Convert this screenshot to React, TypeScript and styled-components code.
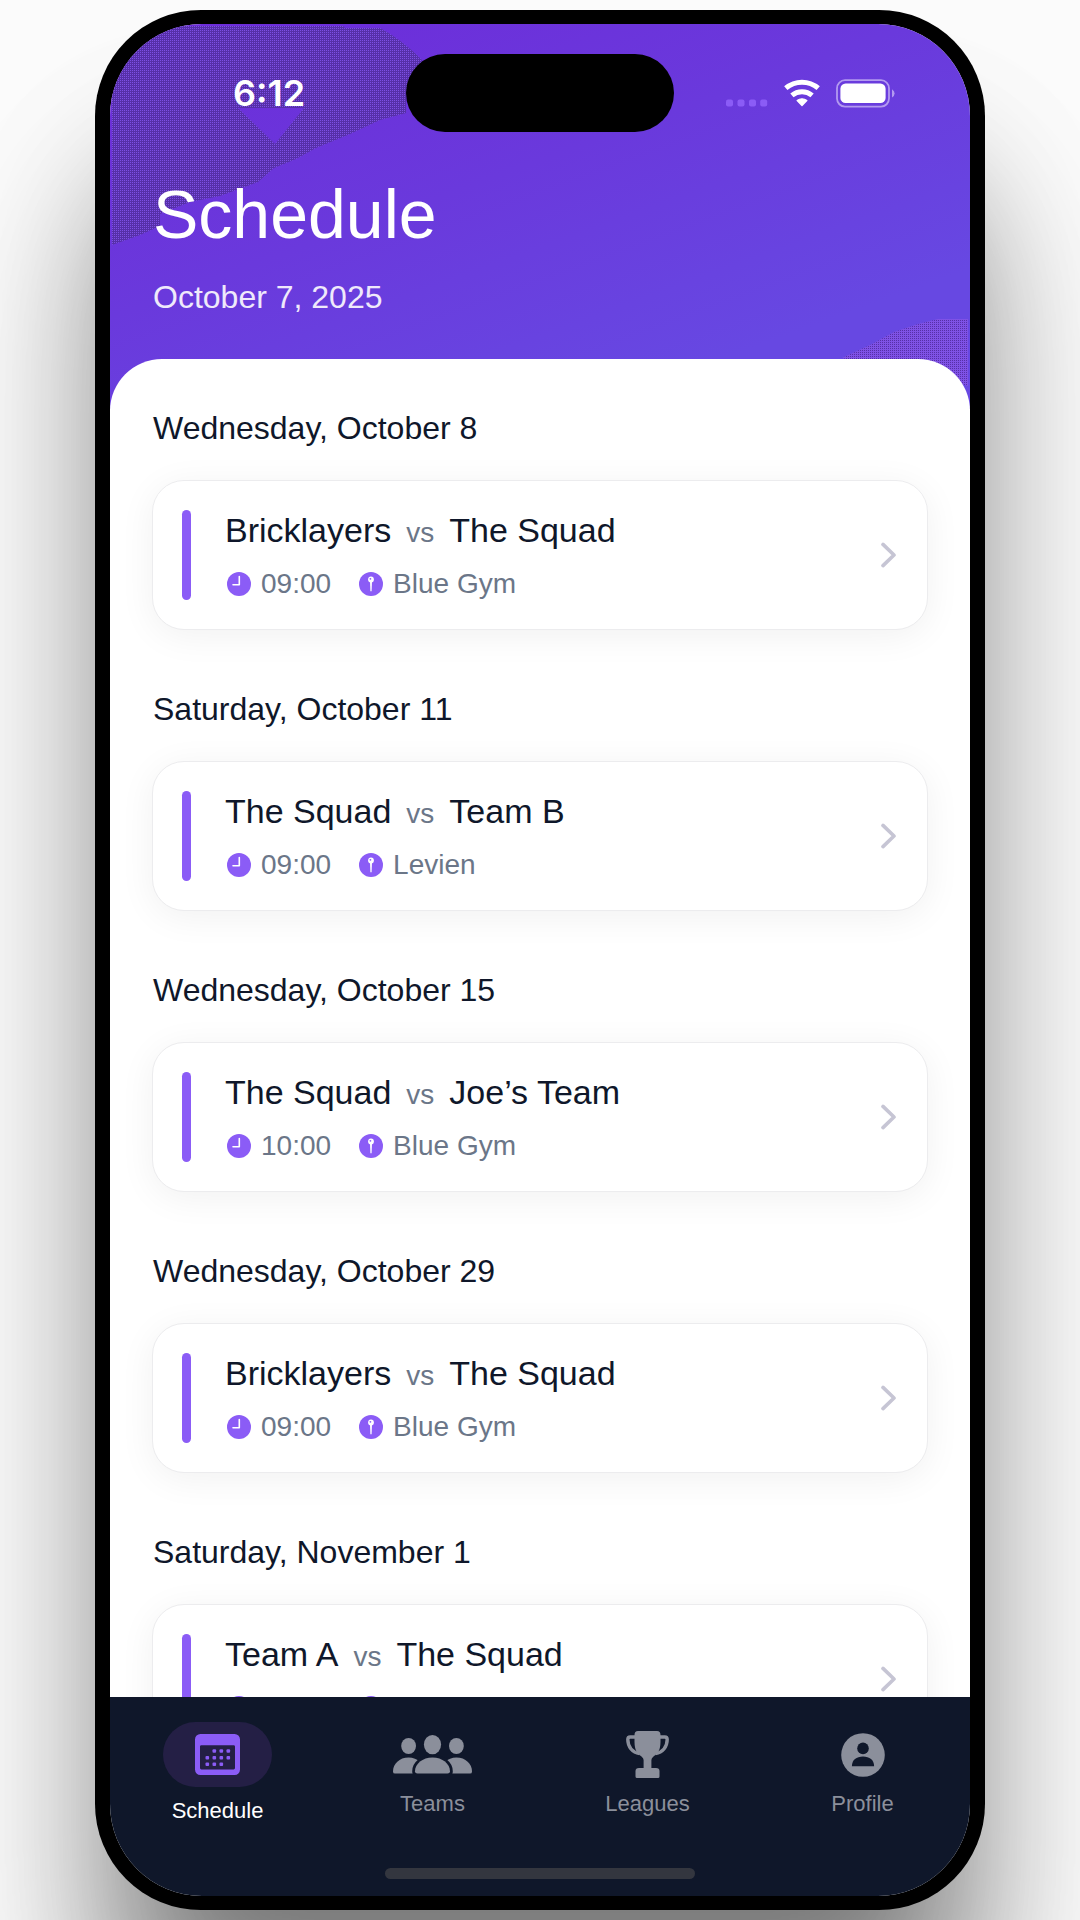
import React from "react";
import styled, { createGlobalStyle } from "styled-components";

const color = {
  ink: "#0f172a",
  muted: "#6b7688",
  violet: "#8b5cf6",
  navy: "#0f172a",
  pill: "#241f45",
  idle: "#8b8f9b",
};

const GlobalStyle = createGlobalStyle`
  *, *::before, *::after { box-sizing: border-box; }
  body {
    margin: 0;
    background: #fbfbfb;
    font-family: "Liberation Sans", Arial, sans-serif;
    color: ${color.ink};
  }
  h1, h2, p, ul { margin: 0; padding: 0; font-weight: 400; }
  ul { list-style: none; }
  a { color: inherit; text-decoration: none; }
  svg { display: block; flex: none; }
`;

const Page = styled.div`
  display: flex;
  justify-content: center;
  height: 100vh;
  padding: 10px 95px;
  overflow: hidden;
`;

const Phone = styled.div`
  display: flex;
  width: 100%;
  max-width: 890px;
  padding: 14px 15px;
  background: #000;
  border-radius: 106px;
  box-shadow: 0 170px 170px 0 rgba(0, 0, 0, 0.2), 0 140px 150px -30px rgba(0, 0, 0, 0.4);
`;

const Screen = styled.div`
  display: flex;
  flex-direction: column;
  flex: 1;
  min-width: 0;
  overflow: hidden;
  background: #fff;
  border-radius: 92px;
`;

const Header = styled.header`
  position: relative;
  flex: none;
  padding: 30px 0 92px;
  color: #fff;
  background: linear-gradient(160deg, #6d2bd9 0%, #6a39dc 42%, #6748e2 80%, #6748e2 100%);
`;

const TextureLeft = styled.svg`
  position: absolute;
  top: 0;
  left: 0;
`;

const TextureRight = styled.svg`
  position: absolute;
  right: 0;
  bottom: 0;
`;

const StatusBar = styled.div`
  position: relative;
  display: grid;
  grid-template-columns: 1fr 268px 1fr;
  align-items: center;
`;

const Time = styled.time`
  padding-left: 22px;
  text-align: center;
  font: 600 36px/40px Inter, "Liberation Sans", sans-serif;
`;

const Island = styled.div`
  height: 78px;
  border-radius: 39px;
  background: #000;
`;

const StatusIcons = styled.div`
  display: flex;
  justify-content: center;
  align-items: center;
  gap: 16px;
  padding-right: 22px;
`;

const Heading = styled.div`
  position: relative;
  display: flex;
  flex-direction: column;
  gap: 25px;
  padding: 44px 43px 0;
`;

const Title = styled.h1`
  font-size: 68px;
  line-height: 76px;
`;

const Today = styled.p`
  font-size: 32px;
  line-height: 40px;
  color: #efe9fb;
`;

const Panel = styled.main`
  position: relative;
  display: flex;
  flex-direction: column;
  gap: 59px;
  flex: 1;
  min-height: 0;
  margin-top: -50px;
  padding: 49px 42px 0;
  overflow: hidden;
  background: #fff;
  border-radius: 52px 52px 0 0;
`;

const Day = styled.section`
  display: flex;
  flex-direction: column;
  flex: none;
  gap: 32px;
`;

const DayTitle = styled.h2`
  padding-left: 1px;
  font-size: 32px;
  line-height: 40px;
`;

const Card = styled.a`
  display: flex;
  align-items: center;
  padding: 29px;
  background: #fff;
  border: 1px solid #ececee;
  border-radius: 32px;
  box-shadow: 0 6px 36px rgba(0, 0, 0, 0.06);
`;

const Accent = styled.span`
  align-self: stretch;
  width: 9px;
  border-radius: 5px;
  background: ${color.violet};
`;

const Details = styled.div`
  flex: 1;
  display: flex;
  flex-direction: column;
  gap: 18px;
  padding-left: 34px;
`;

const Teams = styled.div`
  display: flex;
  align-items: baseline;
  gap: 15px;
  font-size: 34px;
  line-height: 40px;
`;

const Versus = styled.span`
  font-size: 28px;
  line-height: 32px;
  color: ${color.muted};
`;

const Meta = styled.div`
  display: flex;
  gap: 28px;
  padding-left: 2px;
`;

const MetaItem = styled.span`
  display: flex;
  align-items: center;
  gap: 10px;
  font-size: 28px;
  line-height: 32px;
  color: ${color.muted};
`;

const NavBar = styled.footer`
  flex: none;
  display: flex;
  flex-direction: column;
  align-items: center;
  gap: 43px;
  padding: 25px 0 17px;
  background: ${color.navy};
`;

const Tabs = styled.nav`
  align-self: stretch;
  display: grid;
  grid-template-columns: repeat(4, 1fr);
  align-items: center;
`;

const Tab = styled.a<{ $active?: boolean }>`
  display: flex;
  flex-direction: column;
  align-items: center;
  gap: 10px;
  font-size: 22px;
  line-height: 28px;
  color: ${(p) => (p.$active ? "#fff" : color.idle)};
`;

const TabIcon = styled.span<{ $active?: boolean }>`
  display: flex;
  align-items: center;
  justify-content: center;
  width: 109px;
  height: ${(p) => (p.$active ? 65 : 51)}px;
  border-radius: 33px;
  background: ${(p) => (p.$active ? color.pill : "transparent")};
`;

const HomeIndicator = styled.div`
  width: 36%;
  height: 11px;
  border-radius: 6px;
  background: #33363f;
`;

const Grain = ({ id, base, speck }: { id: string; base: string; speck: string }) => (
  <pattern id={id} width="2" height="2" patternUnits="userSpaceOnUse">
    <rect width="2" height="2" fill={base} />
    <rect width="1" height="1" fill={speck} />
  </pattern>
);

const HeaderTexture = () => (
  <>
    <TextureLeft width="320" height="225" viewBox="0 0 320 225" aria-hidden="true">
      <defs><Grain id="grain-left" base="#562fa8" speck="#7d50e4" /></defs>
      <path
        fill="url(#grain-left)"
        fillRule="evenodd"
        d="M2 2H233L235 4H270C288 14 300 24 312 36L296 70V89L270 96L240 110L206 124L186 135L164 144L148 158L110 172L80 178L50 190V202L30 211L2 221ZM128 84L165 120L194 84Z"
      />
    </TextureLeft>
    <TextureRight width="130" height="91" viewBox="0 0 130 91" aria-hidden="true">
      <defs><Grain id="grain-right" base="#7f52e6" speck="#562fa8" /></defs>
      <path fill="url(#grain-right)" d="M2 40L32 26L54 14L78 6L98 1H128V68L100 60Z" />
    </TextureRight>
  </>
);

const SignalIcon = () => (
  <svg width="42" height="28" viewBox="0 0 42 28" fill={color.violet} aria-hidden="true">
    {[0, 11.5, 23, 34.2].map((x) => (
      <rect key={x} x={x} y="20.5" width="7" height="7" rx="2" />
    ))}
  </svg>
);

const WifiIcon = () => (
  <svg width="36" height="28" viewBox="0 0 36 28" aria-hidden="true">
    <g fill="none" stroke="#fff">
      <path strokeWidth="5" d="M1.8 9.2A24.7 24.7 0 0 1 34.2 9.2" />
      <path strokeWidth="5" d="M7.9 16.4A15.5 15.5 0 0 1 28.1 16.4" />
    </g>
    <path
      d="M18 26.4L13.2 21.6A7.5 7.5 0 0 1 22.8 21.6Z"
      fill="#fff" stroke="#fff" strokeWidth="1.4" strokeLinejoin="round"
    />
  </svg>
);

const BatteryIcon = () => (
  <svg width="60" height="29" viewBox="0 0 60 29" aria-hidden="true">
    <rect x="1" y="1.2" width="52" height="26.4" rx="8" fill="none" stroke="#b39af0" strokeWidth="1.8" />
    <rect x="4.4" y="4.5" width="45.2" height="19.6" rx="5.2" fill="#fff" />
    <path d="M56 10.3Q58.6 12 58.6 14.4T56 18.5Z" fill="#b39af0" />
  </svg>
);

const ClockIcon = () => (
  <svg width="24" height="24" viewBox="0 0 24 24" aria-hidden="true">
    <circle cx="12" cy="12" r="12" fill={color.violet} />
    <path d="M12.3 4.5V12.7H6" fill="none" stroke="#fff" strokeWidth="1.6" strokeLinecap="round" strokeLinejoin="round" />
  </svg>
);

const PinIcon = () => (
  <svg width="24" height="24" viewBox="0 0 24 24" aria-hidden="true">
    <circle cx="12" cy="12" r="12" fill={color.violet} />
    <path d="M11 9.5H13L12.6 19.2H11.4Z" fill="#fff" />
    <circle cx="12" cy="7.4" r="2.9" fill="#fff" />
    <circle cx="11.4" cy="6.8" r="0.9" fill={color.violet} />
  </svg>
);

const ChevronIcon = () => (
  <svg width="17" height="26" viewBox="0 0 17 26" aria-hidden="true">
    <path d="M2 2.4L13 13L2 23.6" fill="none" stroke="#c6c5d4" strokeWidth="3.6" strokeLinecap="round" strokeLinejoin="round" />
  </svg>
);

const CalendarIcon = () => (
  <svg width="45" height="41" viewBox="0 0 45 41" fill={color.violet} aria-hidden="true">
    <path
      fillRule="evenodd"
      d="M5.4 0H39.6A5.4 5.4 0 0 1 45 5.4V35.6A5.4 5.4 0 0 1 39.6 41H5.4A5.4 5.4 0 0 1 0 35.6V5.4A5.4 5.4 0 0 1 5.4 0ZM6.4 11.2A1.4 1.4 0 0 0 5 12.6V34A1.4 1.4 0 0 0 6.4 35.4H38.6A1.4 1.4 0 0 0 40 34V12.6A1.4 1.4 0 0 0 38.6 11.2Z"
    />
    {[[19.3, 17], [26.3, 17], [33.3, 17], [12.3, 23.7], [19.3, 23.7], [26.3, 23.7], [33.3, 23.7], [12.3, 30.2], [19.3, 30.2], [26.3, 30.2]].map(([x, y]) => (
      <rect key={`${x}-${y}`} x={x - 1.8} y={y - 1.8} width="3.6" height="3.6" rx="1" />
    ))}
  </svg>
);

const TeamsIcon = () => (
  <svg width="79" height="39" viewBox="0 0 79 39" fill={color.idle} aria-hidden="true">
    <ellipse cx="15.6" cy="11" rx="7.4" ry="8" />
    <ellipse cx="63.4" cy="11" rx="7.4" ry="8" />
    <path d="M0 36.4C0 29 6.4 22.6 15.6 22.6S31 29 31 38.6H2Q0 38.6 0 36.4Z" />
    <path d="M79 36.4C79 29 72.6 22.6 63.4 22.6S48 29 48 38.6H77Q79 38.6 79 36.4Z" />
    <path
      d="M22 36.3C22 29 29.5 22.6 39.5 22.6S57 29 57 36.3Q57 38.6 54.6 38.6H24.4Q22 38.6 22 36.3Z"
      stroke={color.navy} strokeWidth="5.6"
    />
    <path d="M22 36.3C22 29 29.5 22.6 39.5 22.6S57 29 57 36.3Q57 38.6 54.6 38.6H24.4Q22 38.6 22 36.3Z" />
    <ellipse cx="39.5" cy="9.6" rx="8.6" ry="9.6" />
  </svg>
);

const TrophyIcon = () => (
  <svg width="43" height="47" viewBox="0 0 43 47" fill={color.idle} aria-hidden="true">
    <path d="M12 0H31Q34.5 0 34.5 4V11C34.5 20 31 23 27.5 25.5Q25.4 27.2 25.4 29V37H30Q33.5 37 33.5 40V45.5Q33.5 47 32 47H11Q9.5 47 9.5 45.5V40Q9.5 37 13 37H17.6V29Q17.6 27.2 15.5 25.5C12 23 8.5 20 8.5 11V4Q8.5 0 12 0Z" />
    <path
      d="M9.5 6H4.2Q1.8 6 1.8 8.6C1.8 16 6.5 21.6 13.5 22.6M33.5 6H38.8Q41.2 6 41.2 8.6C41.2 16 36.5 21.6 29.5 22.6"
      fill="none" stroke={color.idle} strokeWidth="3.4"
    />
  </svg>
);

const ProfileIcon = () => (
  <svg width="44" height="44" viewBox="0 0 44 44" aria-hidden="true">
    <circle cx="22" cy="22" r="21.8" fill={color.idle} />
    <circle cx="22" cy="15.4" r="5.8" fill={color.navy} />
    <path d="M10.9 33.2C10.9 27 15.5 23.6 22 23.6S33.1 27 33.1 33.2Z" fill={color.navy} />
  </svg>
);

const games = [
  { day: "Wednesday, October 8", home: "Bricklayers", away: "The Squad", time: "09:00", place: "Blue Gym" },
  { day: "Saturday, October 11", home: "The Squad", away: "Team B", time: "09:00", place: "Levien" },
  { day: "Wednesday, October 15", home: "The Squad", away: "Joe’s Team", time: "10:00", place: "Blue Gym" },
  { day: "Wednesday, October 29", home: "Bricklayers", away: "The Squad", time: "09:00", place: "Blue Gym" },
  { day: "Saturday, November 1", home: "Team A", away: "The Squad", time: "09:00", place: "Blue Gym" },
];

const tabs = [
  { label: "Schedule", Icon: CalendarIcon, active: true },
  { label: "Teams", Icon: TeamsIcon, active: false },
  { label: "Leagues", Icon: TrophyIcon, active: false },
  { label: "Profile", Icon: ProfileIcon, active: false },
];

export default function App() {
  return (
    <Page>
      <GlobalStyle />
      <Phone>
        <Screen>
          <Header>
            <HeaderTexture />
            <StatusBar>
              <Time>6:12</Time>
              <Island />
              <StatusIcons>
                <SignalIcon />
                <WifiIcon />
                <BatteryIcon />
              </StatusIcons>
            </StatusBar>
            <Heading>
              <Title>Schedule</Title>
              <Today>October 7, 2025</Today>
            </Heading>
          </Header>
          <Panel>
            {games.map((game) => (
              <Day key={game.day}>
                <DayTitle>{game.day}</DayTitle>
                <Card href="#game">
                  <Accent />
                  <Details>
                    <Teams>
                      <span>{game.home}</span>
                      <Versus>vs</Versus>
                      <span>{game.away}</span>
                    </Teams>
                    <Meta>
                      <MetaItem><ClockIcon />{game.time}</MetaItem>
                      <MetaItem><PinIcon />{game.place}</MetaItem>
                    </Meta>
                  </Details>
                  <ChevronIcon />
                </Card>
              </Day>
            ))}
          </Panel>
          <NavBar>
            <Tabs aria-label="Main">
              {tabs.map(({ label, Icon, active }) => (
                <Tab key={label} href={`#${label.toLowerCase()}`} $active={active} aria-current={active ? "page" : undefined}>
                  <TabIcon $active={active}><Icon /></TabIcon>
                  {label}
                </Tab>
              ))}
            </Tabs>
            <HomeIndicator />
          </NavBar>
        </Screen>
      </Phone>
    </Page>
  );
}
